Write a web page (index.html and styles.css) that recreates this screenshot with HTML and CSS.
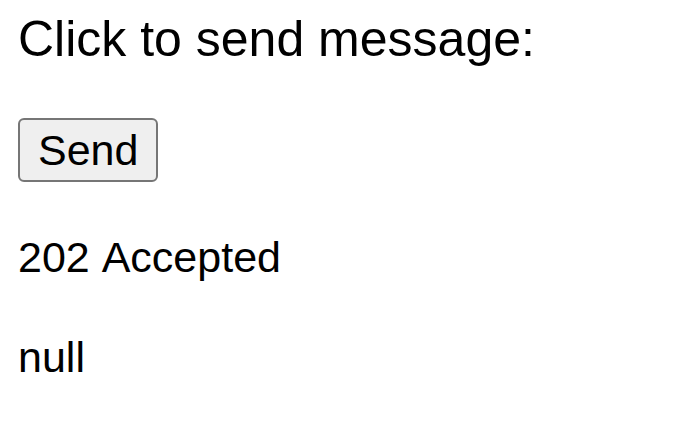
FILE: index.html
```html
<!DOCTYPE html>
<html lang="en">
<head>
<meta charset="utf-8">
<title>Send message</title>
<link rel="stylesheet" href="styles.css">
</head>
<body>
<main class="page">
<p class="prompt">Click to send message:</p>
<button class="send" type="button">Send</button>
<p class="status">202 Accepted</p>
<p class="result">null</p>
</main>
</body>
</html>
```

FILE: styles.css
```css
body {
  margin: 0;
  background: #fff;
  color: #000;
  font-family: "Liberation Sans", Arial, sans-serif;
  font-kerning: none;
}

.page {
  display: flex;
  flex-direction: column;
  align-items: flex-start;
  padding: 10px 18px;
}

p {
  margin: 0;
}

.prompt {
  font-size: 50px;
  line-height: 58px;
}

.send {
  margin: 50px 0;
  padding: 4px 18px;
  border: 2px solid #767676;
  border-radius: 6px;
  background: #efefef;
  color: #000;
  font-family: inherit;
  font-size: 43px;
  line-height: 52px;
}

.status,
.result {
  font-size: 43px;
  line-height: 50px;
}

.result {
  margin-top: 50px;
}
```
